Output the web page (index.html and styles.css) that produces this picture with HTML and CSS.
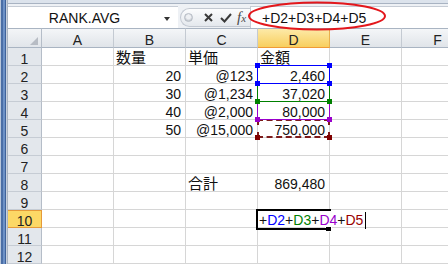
FILE: index.html
```html
<!DOCTYPE html>
<html lang="ja">
  <head>
    <meta charset="UTF-8" />
    <meta name="viewport" content="width=device-width, initial-scale=1.0" />
    <title>RANK.AVG</title>
    <link rel="stylesheet" href="styles.css">
  </head>
  <body>
    <div class="app">
      <div class="strip"></div>
      <div class="main">
        <div class="fbar">
          <div class="namebox">
            <span class="name">RANK.AVG</span>
            <i class="drop"></i>
          </div>
          <div class="tools">
            <div class="pill">
              <i class="knob"></i>
              <svg class="ico-x" width="9" height="9" viewBox="0 0 9 9"><path d="M1 1L8 8M8 1L1 8" stroke="#3a3a3a" stroke-width="2" /></svg>
              <svg class="ico-ok" width="12" height="10" viewBox="0 0 12 10"><path d="M1 5L4.5 8.5L11 1" fill="none" stroke="#3a3a3a" stroke-width="2" /></svg>
              <span class="fx">f<small>x</small></span>
            </div>
          </div>
          <div class="formula">+D2+D3+D4+D5</div>
          <!-- 数式を囲む赤い丸 -->
          <svg class="mark" width="140" height="30" viewBox="0 0 140 30"><ellipse cx="70" cy="15" rx="68" ry="13.5" fill="none" stroke="#e3171c" stroke-width="2" /></svg>
        </div>

        <div class="sheet">
          <div class="corner"><i class="tri"></i></div>
          <div class="ch">A</div>
          <div class="ch">B</div>
          <div class="ch">C</div>
          <div class="ch sel">D</div>
          <div class="ch">E</div>
          <div class="ch">F</div>

          <div class="rh">1</div>
          <div></div>
          <div><span class="jp">数量</span></div>
          <div><span class="jp">単価</span></div>
          <div><span class="jp">金額</span></div>
          <div></div>
          <div></div>

          <div class="rh">2</div>
          <div></div>
          <div class="num">20</div>
          <div class="num">@123</div>
          <div class="num">2,460<i class="ref r2"></i></div>
          <div></div>
          <div></div>

          <div class="rh">3</div>
          <div></div>
          <div class="num">30</div>
          <div class="num">@1,234</div>
          <div class="num">37,020<i class="ref r3"></i></div>
          <div></div>
          <div></div>

          <div class="rh">4</div>
          <div></div>
          <div class="num">40</div>
          <div class="num">@2,000</div>
          <div class="num">80,000<i class="ref r4"></i></div>
          <div></div>
          <div></div>

          <div class="rh">5</div>
          <div></div>
          <div class="num">50</div>
          <div class="num">@15,000</div>
          <div class="num">750,000<i class="ref r5"></i></div>
          <div></div>
          <div></div>

          <div class="rh">6</div>
          <div></div><div></div><div></div><div></div><div></div><div></div>

          <div class="rh">7</div>
          <div></div><div></div><div></div><div></div><div></div><div></div>

          <div class="rh">8</div>
          <div></div>
          <div></div>
          <div><span class="jp">合計</span></div>
          <div class="num">869,480</div>
          <div></div>
          <div></div>

          <div class="rh">9</div>
          <div></div><div></div><div></div><div></div><div></div><div></div>

          <div class="rh sel">10</div>
          <div></div>
          <div></div>
          <div></div>
          <div>
            <div class="edit">+<span class="c2">D2</span>+<span class="c3">D3</span>+<span class="c4">D4</span>+<span class="c5">D5</span><i class="caret"></i></div>
            <i class="active"></i>
            <i class="handle"></i>
          </div>
          <div></div>
          <div></div>

          <div class="rh">11</div>
          <div></div><div></div><div></div><div></div><div></div><div></div>

          <div class="rh">12</div>
          <div></div><div></div><div></div><div></div><div></div><div></div>
        </div>
      </div>
    </div>
  </body>
</html>
```

FILE: styles.css
```css
body {
  margin: 0;
  width: 448px;
  height: 264px;
  overflow: hidden;
  background: #fff;
  color: #111;
  font-family: "Liberation Sans", "Noto Sans CJK JP", sans-serif;
  font-size: 14px;
}
.app {
  display: flex;
  height: 264px;
}
.strip {
  flex: 0 0 8px;
  background: linear-gradient(to right, #b8c6da 0 1px, #4a6ea6 1px 3px, #6d91c6 3px 5px, #3e629a 5px 6px, #c8d0dc 6px 7px, #a9b3c1 7px 8px);
}
.main {
  flex: 1;
  min-width: 0;
  overflow: hidden;
}

/* 数式バー */
.fbar {
  position: relative;
  display: flex;
  height: 28px;
  box-sizing: border-box;
  padding-top: 6px;
  background: linear-gradient(#dce3ec 0 3px, #a8b3c2 3px 4px, #eef1f5 4px);
}
.namebox {
  display: flex;
  align-items: flex-start;
  width: 170px;
  box-sizing: border-box;
  padding: 3px 8px 0 0;
  background: #fff;
  border-top: 1px solid #c6ccd5;
  line-height: 16px;
}
.name {
  flex: 1;
  text-align: center;
  padding-right: 3px;
}
.drop {
  margin-top: 7px;
  width: 0;
  height: 0;
  border-left: 3.5px solid transparent;
  border-right: 3.5px solid transparent;
  border-top: 4px solid #333;
}
.tools {
  display: flex;
  width: 72px;
  padding: 2px 0 1px 2px;
  box-sizing: border-box;
}
.pill {
  flex: 1;
  display: flex;
  align-items: center;
  border: 1px solid #c3c9d2;
  border-right: 0;
  border-radius: 10px 0 0 10px;
  background: linear-gradient(#fbfcfd, #e4e8ed);
}
.knob {
  margin-left: 3px;
  width: 9px;
  height: 9px;
  border-radius: 50%;
  background: radial-gradient(circle at 50% 40%, #eef0f3 0 2px, #c3c8cf 4px);
  border: 1px solid #b7bdc6;
  box-sizing: border-box;
}
.ico-x {
  margin-left: 11px;
}
.ico-ok {
  margin-left: 7px;
}
.fx {
  margin-left: 5px;
  font-family: "Liberation Serif", serif;
  font-style: italic;
  font-size: 15px;
  color: #4a4a4a;
}
.fx small {
  font-size: 11px;
}
.formula {
  flex: 1;
  padding: 3px 0 0 11px;
  background: #fff;
  border-top: 1px solid #c6ccd5;
  border-left: 1px solid #c6ccd5;
  line-height: 16px;
  white-space: nowrap;
}
.mark {
  position: absolute;
  left: 239px;
  top: 1px;
  z-index: 10;
}

/* シート */
.sheet {
  display: grid;
  grid-template-columns: 34px repeat(6, 72px);
  grid-template-rows: 20px repeat(12, 18px);
}
.sheet > div {
  position: relative;
  box-sizing: border-box;
  padding: 2px 4px 0 2px;
  border-right: 1px solid #d6d6d6;
  border-bottom: 1px solid #d6d6d6;
  line-height: 16px;
  white-space: nowrap;
}
.sheet > .corner {
  display: flex;
  align-items: flex-end;
  justify-content: flex-end;
  padding: 0 3px 2px 0;
  background: linear-gradient(#f3f5f7, #e1e5ea);
  border-top: 1px solid #a9b4c2;
  border-right-color: #b5bdc8;
  border-bottom-color: #a9b4c2;
}
.tri {
  width: 0;
  height: 0;
  border-left: 8px solid transparent;
  border-bottom: 8px solid #b7bcc4;
}
.sheet > .ch {
  padding: 3px 0 0;
  text-align: center;
  color: #222;
  background: linear-gradient(#f4f6f8, #e0e4e9);
  border-top: 1px solid #a9b4c2;
  border-right-color: #c4cad2;
  border-bottom-color: #a9b4c2;
}
.sheet > .ch.sel {
  background: linear-gradient(#fdeaa8, #f8cf5e);
  border-bottom-color: #f09a36;
  border-right-color: #e9b04d;
}
.sheet > .rh {
  padding: 3px 0 0;
  text-align: center;
  color: #222;
  background: #e3e7ec;
  border-right-color: #b5bdc8;
  border-bottom-color: #c6ccd4;
}
.sheet > .rh.sel {
  background: #fcd866;
  border-right-color: #e59a3a;
  border-bottom-color: #e59a3a;
  box-shadow: inset 0 1px 0 #e59a3a;
}
.sheet > .num {
  text-align: right;
}
.jp {
  font-size: 15px;
}

/* 参照範囲の枠 */
.ref {
  position: absolute;
  left: -1px;
  top: -1px;
  width: 73px;
  height: 19px;
  box-sizing: border-box;
  border: 1px solid currentColor;
}
.ref::before,
.ref::after {
  content: "";
  position: absolute;
  left: -3px;
  width: 5px;
  height: 5px;
  background: currentColor;
  box-shadow: 72px 0 0 currentColor;
}
.ref::before {
  top: -3px;
}
.ref::after {
  top: 15px;
}
.r2 { color: #0000ff; z-index: 4; }
.r3 { color: #008000; z-index: 3; }
.r4 { color: #9900cc; z-index: 2; }
.r5 {
  color: #800000;
  z-index: 1;
  border: 2px dashed #7d1b1b;
  background: none;
}
.r5::before,
.r5::after {
  left: -4px;
}
.r5::before { top: -4px; }
.r5::after { top: 14px; }

/* 編集中のセル */
.edit {
  position: absolute;
  left: 0;
  top: 0;
  z-index: 5;
  width: 110px;
  height: 17px;
  box-sizing: border-box;
  padding: 2px 0 0 1px;
  background: #fff;
  line-height: 16px;
}
.c2 { color: #0000ff; }
.c3 { color: #008000; }
.c4 { color: #9900cc; }
.c5 { color: #990000; }
.caret {
  display: inline-block;
  width: 1px;
  height: 17px;
  margin-left: 2px;
  vertical-align: -4px;
  background: #000;
}
.active {
  position: absolute;
  left: -2px;
  top: -1px;
  z-index: 6;
  width: 75px;
  height: 21px;
  box-sizing: border-box;
  border: 2px solid #000;
  border-right: 0;
}
.handle {
  position: absolute;
  left: 68px;
  top: 16px;
  z-index: 4;
  width: 5px;
  height: 5px;
  background: #000;
  box-shadow: 0 0 0 1px #fff;
}
```
